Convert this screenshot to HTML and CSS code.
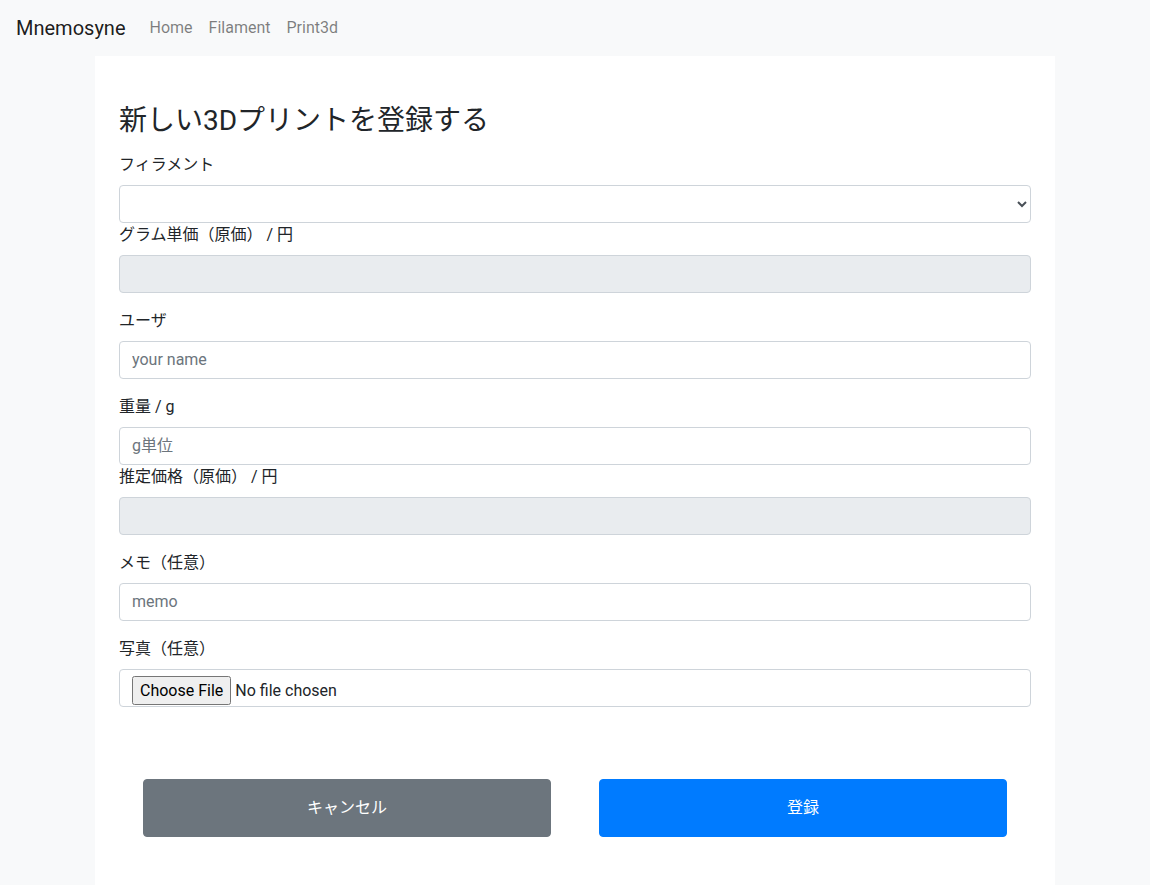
FILE: index.html
```html
<!DOCTYPE html>
<html lang="ja">
<head>
<meta charset="utf-8">
<title>Mnemosyne</title>
<link rel="stylesheet" href="styles.css">
</head>
<body>
<nav class="navbar">
  <a class="brand" href="#">Mnemosyne</a>
  <ul class="nav">
    <li><a class="nav-link" href="#">Home</a></li>
    <li><a class="nav-link" href="#">Filament</a></li>
    <li><a class="nav-link" href="#">Print3d</a></li>
  </ul>
</nav>
<main class="container">
  <h3 class="title">新しい3Dプリントを登録する</h3>
  <form class="form">
    <label class="label">フィラメント</label>
    <select class="control select"><option></option></select>
    <label class="label">グラム単価（原価） / 円</label>
    <input class="control" type="text" disabled>

    <div class="group">
      <label class="label">ユーザ</label>
      <input class="control" type="text" placeholder="your name">
    </div>
    <div class="group">
      <label class="label">重量 / g</label>
      <input class="control" type="text" placeholder="g単位">
    </div>
    <label class="label">推定価格（原価） / 円</label>
    <input class="control" type="text" disabled>

    <div class="group">
      <label class="label">メモ（任意）</label>
      <input class="control" type="text" placeholder="memo">
    </div>
    <div class="group">
      <label class="label">写真（任意）</label>
      <input class="control file" type="file">
    </div>

    <div class="actions">
      <div class="col"><button type="button" class="btn btn-secondary">キャンセル</button></div>
      <div class="col"><button type="button" class="btn btn-primary">登録</button></div>
    </div>
  </form>
</main>
</body>
</html>
```

FILE: styles.css
```css
* { box-sizing: border-box; }
html, body { margin: 0; padding: 0; }
body {
  font-family: Roboto, "Noto Sans CJK JP", sans-serif;
  font-size: 16px;
  line-height: 1.5;
  color: #212529;
  background: #f8f9fa;
  min-height: 885px;
}
.navbar {
  display: flex;
  align-items: center;
  padding: 8px 16px;
  background: #f8f9fa;
}
.brand {
  font-size: 20px;
  line-height: 30px;
  padding: 5px 0;
  margin-right: 16px;
  color: rgba(0,0,0,.9);
  text-decoration: none;
}
.nav {
  display: flex;
  list-style: none;
  margin: 0;
  padding: 0;
}
.nav-link {
  display: block;
  padding: 8px;
  color: rgba(0,0,0,.5);
  text-decoration: none;
}
.container {
  width: 960px;
  margin: 0 auto;
  background: #fff;
  padding: 48px 24px 48px;
  min-height: 829px;
}
.title {
  margin: 0 0 15px;
  font-size: 28px;
  font-weight: 400;
  line-height: 1.2;
}
.form { display: block; }
.label {
  display: inline-block;
  margin-bottom: 8px;
}
.control {
  display: block;
  width: 100%;
  height: 38px;
  padding: 6px 12px;
  font-family: inherit;
  font-size: 16px;
  line-height: 1.5;
  color: #495057;
  background: #fff;
  border: 1px solid #ced4da;
  border-radius: 4px;
}
.control::placeholder { color: #6c757d; opacity: 1; }
.control:disabled { background: #e9ecef; }
.group { margin-top: 16px; }
.file { padding: 6px 12px; color: #212529; line-height: 1.5; }
.file::file-selector-button {
  font-family: inherit;
  font-size: 16px;
  line-height: 1.5;
  padding: 1px 6px;
  margin: 0 4px 0 0;
  height: 29px;
}
.actions {
  display: flex;
  margin-top: 72px;
}
.col {
  flex: 1;
  padding: 0 24px;
}
.btn {
  display: block;
  width: 100%;
  padding: 16px;
  font-family: inherit;
  font-size: 16px;
  line-height: 24px;
  border: 1px solid transparent;
  border-radius: 4px;
  color: #fff;
  text-align: center;
}
.btn-secondary { background: #6c757d; border-color: #6c757d; }
.btn-primary { background: #007bff; border-color: #007bff; }
```
